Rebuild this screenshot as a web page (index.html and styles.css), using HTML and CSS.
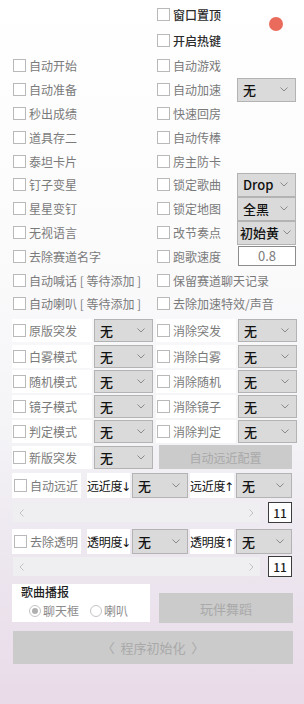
FILE: index.html
```html
<html>
    <head>
        <title>helper</title>
        <link rel="stylesheet" href="styles.css">
    </head>
    <body>
        <div class="app">
            <div class="top">
                <div></div>
                <div class="top-list">
                    <label class="chk strong"><span class="box"></span>窗口置顶</label>
                    <label class="chk strong"><span class="box"></span>开启热键</label>
                </div>
                <span class="dot"></span>
            </div>

            <!-- plain checkbox rows -->
            <div class="rows">
                <div class="row">
                    <div class="cell"><label class="chk"><span class="box"></span>自动开始</label></div>
                    <div class="cell"><label class="chk"><span class="box"></span>自动游戏</label></div>
                </div>
                <div class="row">
                    <div class="cell"><label class="chk"><span class="box"></span>自动准备</label></div>
                    <div class="cell">
                        <label class="chk wide"><span class="box"></span>自动加速</label>
                        <div class="sel tall">无<svg width="8" height="5"><polyline points="0.5,0.5 4,4 7.5,0.5" /></svg></div>
                    </div>
                </div>
                <div class="row">
                    <div class="cell"><label class="chk"><span class="box"></span>秒出成绩</label></div>
                    <div class="cell"><label class="chk"><span class="box"></span>快速回房</label></div>
                </div>
                <div class="row">
                    <div class="cell"><label class="chk"><span class="box"></span>道具存二</label></div>
                    <div class="cell"><label class="chk"><span class="box"></span>自动传棒</label></div>
                </div>
                <div class="row">
                    <div class="cell"><label class="chk"><span class="box"></span>泰坦卡片</label></div>
                    <div class="cell"><label class="chk"><span class="box"></span>房主防卡</label></div>
                </div>
                <div class="row">
                    <div class="cell"><label class="chk"><span class="box"></span>钉子变星</label></div>
                    <div class="cell">
                        <label class="chk wide"><span class="box"></span>锁定歌曲</label>
                        <div class="sel tall">Drop<svg width="8" height="5"><polyline points="0.5,0.5 4,4 7.5,0.5" /></svg></div>
                    </div>
                </div>
                <div class="row">
                    <div class="cell"><label class="chk"><span class="box"></span>星星变钉</label></div>
                    <div class="cell">
                        <label class="chk wide"><span class="box"></span>锁定地图</label>
                        <div class="sel tall">全黑<svg width="8" height="5"><polyline points="0.5,0.5 4,4 7.5,0.5" /></svg></div>
                    </div>
                </div>
                <div class="row">
                    <div class="cell"><label class="chk"><span class="box"></span>无视语言</label></div>
                    <div class="cell">
                        <label class="chk wide"><span class="box"></span>改节奏点</label>
                        <div class="sel tall tight">初始黄<svg width="8" height="5"><polyline points="0.5,0.5 4,4 7.5,0.5" /></svg></div>
                    </div>
                </div>
                <div class="row">
                    <div class="cell"><label class="chk"><span class="box"></span>去除赛道名字</label></div>
                    <div class="cell">
                        <label class="chk wide"><span class="box"></span>跑歌速度</label>
                        <div class="num">0.8</div>
                    </div>
                </div>
                <div class="row">
                    <div class="cell"><label class="chk"><span class="box"></span>自动喊话 [ 等待添加 ]</label></div>
                    <div class="cell"><label class="chk"><span class="box"></span>保留赛道聊天记录</label></div>
                </div>
                <div class="row">
                    <div class="cell"><label class="chk"><span class="box"></span>自动喇叭 [ 等待添加 ]</label></div>
                    <div class="cell"><label class="chk"><span class="box"></span>去除加速特效/声音</label></div>
                </div>
            </div>

            <!-- mode rows with dropdowns -->
            <div class="modes">
                <div class="row mode">
                    <div class="cell"><label class="chk lbl"><span class="box"></span>原版突发</label><div class="sel">无<svg width="8" height="5"><polyline points="0.5,0.5 4,4 7.5,0.5" /></svg></div></div>
                    <div class="cell"><label class="chk lbl"><span class="box"></span>消除突发</label><div class="sel">无<svg width="8" height="5"><polyline points="0.5,0.5 4,4 7.5,0.5" /></svg></div></div>
                </div>
                <div class="row mode">
                    <div class="cell"><label class="chk lbl"><span class="box"></span>白雾模式</label><div class="sel">无<svg width="8" height="5"><polyline points="0.5,0.5 4,4 7.5,0.5" /></svg></div></div>
                    <div class="cell"><label class="chk lbl"><span class="box"></span>消除白雾</label><div class="sel">无<svg width="8" height="5"><polyline points="0.5,0.5 4,4 7.5,0.5" /></svg></div></div>
                </div>
                <div class="row mode">
                    <div class="cell"><label class="chk lbl"><span class="box"></span>随机模式</label><div class="sel">无<svg width="8" height="5"><polyline points="0.5,0.5 4,4 7.5,0.5" /></svg></div></div>
                    <div class="cell"><label class="chk lbl"><span class="box"></span>消除随机</label><div class="sel">无<svg width="8" height="5"><polyline points="0.5,0.5 4,4 7.5,0.5" /></svg></div></div>
                </div>
                <div class="row mode">
                    <div class="cell"><label class="chk lbl"><span class="box"></span>镜子模式</label><div class="sel">无<svg width="8" height="5"><polyline points="0.5,0.5 4,4 7.5,0.5" /></svg></div></div>
                    <div class="cell"><label class="chk lbl"><span class="box"></span>消除镜子</label><div class="sel">无<svg width="8" height="5"><polyline points="0.5,0.5 4,4 7.5,0.5" /></svg></div></div>
                </div>
                <div class="row mode">
                    <div class="cell"><label class="chk lbl"><span class="box"></span>判定模式</label><div class="sel">无<svg width="8" height="5"><polyline points="0.5,0.5 4,4 7.5,0.5" /></svg></div></div>
                    <div class="cell"><label class="chk lbl"><span class="box"></span>消除判定</label><div class="sel">无<svg width="8" height="5"><polyline points="0.5,0.5 4,4 7.5,0.5" /></svg></div></div>
                </div>
                <div class="row mode">
                    <div class="cell"><label class="chk lbl"><span class="box"></span>新版突发</label><div class="sel">无<svg width="8" height="5"><polyline points="0.5,0.5 4,4 7.5,0.5" /></svg></div></div>
                    <div class="cell"><button class="btn cfg">自动远近配置</button></div>
                </div>
            </div>

            <!-- range rows -->
            <div class="range">
                <label class="chk white first"><span class="box"></span>自动远近</label>
                <span class="tag">远近度<span class="arrow">↓</span></span>
                <div class="sel">无<svg width="8" height="5"><polyline points="0.5,0.5 4,4 7.5,0.5" /></svg></div>
                <span class="tag">远近度<span class="arrow">↑</span></span>
                <div class="sel">无<svg width="8" height="5"><polyline points="0.5,0.5 4,4 7.5,0.5" /></svg></div>
            </div>
            <div class="scroll">
                <div class="bar">
                    <svg width="5" height="8"><polyline points="4.5,0.5 1,4 4.5,7.5" /></svg>
                    <svg width="5" height="8"><polyline points="0.5,0.5 4,4 0.5,7.5" /></svg>
                </div>
                <div class="val">11</div>
            </div>

            <div class="range second">
                <label class="chk white first"><span class="box"></span>去除透明</label>
                <span class="tag">透明度<span class="arrow">↓</span></span>
                <div class="sel">无<svg width="8" height="5"><polyline points="0.5,0.5 4,4 7.5,0.5" /></svg></div>
                <span class="tag">透明度<span class="arrow">↑</span></span>
                <div class="sel">无<svg width="8" height="5"><polyline points="0.5,0.5 4,4 7.5,0.5" /></svg></div>
            </div>
            <div class="scroll second">
                <div class="bar">
                    <svg width="5" height="8"><polyline points="4.5,0.5 1,4 4.5,7.5" /></svg>
                    <svg width="5" height="8"><polyline points="0.5,0.5 4,4 0.5,7.5" /></svg>
                </div>
                <div class="val">11</div>
            </div>

            <div class="bottom">
                <div class="group">
                    <div class="legend">歌曲播报</div>
                    <div class="radios">
                        <label class="radio"><span class="ring on"></span>聊天框</label>
                        <label class="radio"><span class="ring"></span>喇叭</label>
                    </div>
                </div>
                <button class="btn dance">玩伴舞蹈</button>
            </div>
            <button class="btn init">〈&nbsp;&nbsp;程序初始化&nbsp;&nbsp;〉</button>
        </div>
    </body>
</html>
```

FILE: styles.css
```css
html {
    background: linear-gradient(to bottom, #ffffff 0%, #fbfbfc 35%, #f4f3f6 62%, #ece6ef 80%, #e9dbe8 100%);
    min-height: 704px;
}
body {
    margin: 0;
    font-family: "Noto Sans CJK SC", "Noto Sans", sans-serif;
    font-size: 12px;
    color: #7a7a7a;
}
.app {
    padding-left: 12px;
}
/* title rows on the right, with the status dot */
.top {
    display: grid;
    grid-template-columns: 144px 1fr 14px;
    padding: 2px 21px 2px 0;
    height: 50px;
}
.top-list {
    display: flex;
    flex-direction: column;
    gap: 2px;
}
.top-list .chk {
    height: 24px;
}
.dot {
    width: 14px;
    height: 14px;
    border-radius: 50%;
    background: #ea6a5c;
    margin-top: 15px;
}
/* rows in two columns */
.row {
    display: grid;
    grid-template-columns: 144px 140px;
    height: 23.8px;
}
.cell {
    display: flex;
    align-items: center;
}
.chk {
    display: flex;
    align-items: center;
    gap: 3px;
    white-space: nowrap;
    padding-left: 1px;
}
.chk.strong {
    color: #2b2b2b;
    font-weight: 500;
}
.chk.wide {
    width: 79px;
    flex: none;
}
.box {
    width: 13px;
    height: 13px;
    box-sizing: border-box;
    border: 1px solid #b9b9b9;
    background: #fff;
    flex: none;
}
/* dropdowns */
.sel {
    display: flex;
    align-items: center;
    justify-content: space-between;
    box-sizing: border-box;
    height: 23px;
    width: 59px;
    padding: 0 7px 0 5px;
    background: #dadada;
    border: 1px solid #b3b3b3;
    color: #111;
    font-size: 13px;
    font-weight: 500;
    flex: none;
}
.sel.tall {
    height: 24px;
    margin-left: 1px;
}
.sel.tight {
    padding: 0 4px 0 2px;
}
.sel svg, .bar svg {
    fill: none;
    stroke: #8a8a8a;
    stroke-width: 1;
}
.num {
    width: 58px;
    height: 20px;
    margin-left: 2px;
    box-sizing: border-box;
    border: 1px solid #8c8c8c;
    background: #fff;
    text-align: center;
    line-height: 18px;
    color: #7c7c7c;
    font-size: 13px;
}
/* rows with a dropdown in each column */
.modes {
    margin-top: 2.6px;
}
.row.mode {
    height: 25.25px;
}
.lbl {
    width: 79px;
    height: 23px;
    margin-right: 2px;
    background: #fff;
    flex: none;
}
.btn {
    font-family: "Noto Sans CJK SC", "Noto Sans", sans-serif;
    font-size: 12px;
    color: #a9a9a9;
    background: #cbcbcb;
    border: none;
    padding: 0;
}
.btn.cfg {
    width: 133px;
    height: 24px;
    margin-left: 3px;
}
/* range rows */
.range {
    display: flex;
    align-items: center;
    height: 25px;
    margin-top: 3.5px;
}
.range.second {
    margin-top: 6px;
}
.range .first {
    width: 69px;
    height: 25px;
    margin-right: 6px;
    background: #fff;
    box-sizing: border-box;
    padding-left: 2px;
}
.range .sel {
    width: 56px;
    height: 25px;
}
.tag {
    background: #fff;
    color: #111;
    height: 25px;
    line-height: 25px;
    width: 43px;
    margin-right: 2px;
    white-space: nowrap;
    letter-spacing: -0.3px;
    flex: none;
}
.arrow {
    font-family: "DejaVu Sans", sans-serif;
    font-size: 12px;
    letter-spacing: 0;
    margin-left: -1px;
}
.range .sel + .tag {
    margin-left: 2px;
    width: 44px;
}
.scroll {
    display: flex;
    align-items: center;
    gap: 8px;
    height: 21px;
    margin-top: 4px;
}
.scroll.second {
    margin-top: 2px;
}
.bar {
    width: 247px;
    height: 19px;
    margin-left: 1px;
    background: #efeff1;
    display: flex;
    align-items: center;
    justify-content: space-between;
    padding: 0 6px 0 6px;
    box-sizing: border-box;
}
.bar svg {
    stroke: #c2c2c2;
}
.val {
    width: 24px;
    height: 21px;
    box-sizing: border-box;
    border: 1px solid #3c3c3c;
    background: #fff;
    color: #1c1c1c;
    font-weight: 500;
    text-align: center;
    line-height: 19px;
}
/* bottom block */
.bottom {
    display: flex;
    margin-top: 7px;
}
.group {
    width: 138px;
    height: 38px;
    background: #fff;
}
.legend {
    color: #1e1e1e;
    font-weight: 500;
    padding-left: 9px;
    height: 16px;
    line-height: 16px;
}
.radios {
    display: flex;
    gap: 11px;
    padding-left: 17px;
    margin-top: 2px;
}
.radio {
    display: flex;
    align-items: center;
    gap: 2px;
    color: #8c8c8c;
    font-size: 12px;
}
.ring {
    width: 12px;
    height: 12px;
    box-sizing: border-box;
    border: 1px solid #c4c4c4;
    border-radius: 50%;
    background: #fff;
    display: flex;
    align-items: center;
    justify-content: center;
}
.ring.on::after {
    content: "";
    width: 6px;
    height: 6px;
    border-radius: 50%;
    background: #b0b0b0;
}
.btn.dance {
    width: 134px;
    height: 30px;
    margin: 9px 0 0 9px;
    font-size: 13px;
}
.btn.init {
    display: block;
    width: 280px;
    height: 33px;
    margin: 8px 0 0 1px;
    font-size: 13px;
}
```
